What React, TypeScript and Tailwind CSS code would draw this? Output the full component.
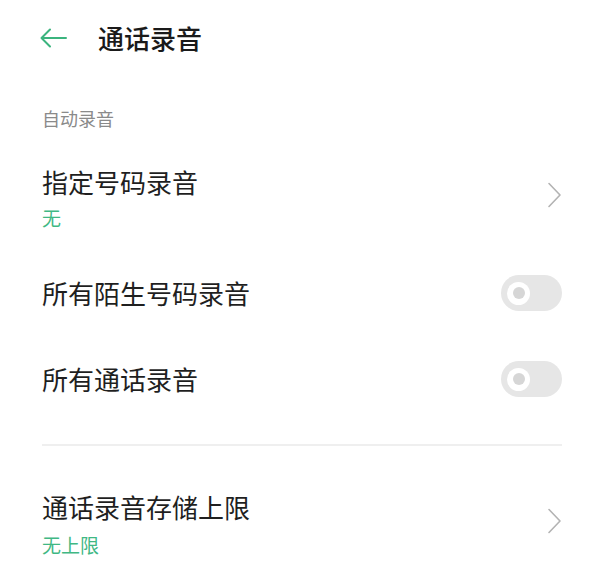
import React from 'react';

const FONT = { fontFamily: '"Noto Sans CJK SC", "Noto Sans", sans-serif' };

function Chevron() {
  return (
    <svg width="15" height="26" viewBox="0 0 15 26" fill="none" className="mb-[6px] shrink-0">
      <path d="M2 1.5 L13 13 L2 24.5" stroke="#b3b3b3" strokeWidth="1.6" strokeLinecap="round" strokeLinejoin="round" />
    </svg>
  );
}

function Toggle() {
  return (
    <div className="w-[61px] h-[36px] rounded-full bg-[#e6e6e6] flex items-center pl-[6px] shrink-0">
      <div className="w-[23px] h-[23px] rounded-full bg-white flex items-center justify-center">
        <div className="w-[12px] h-[12px] rounded-full bg-[#d6d6d6]" />
      </div>
    </div>
  );
}

function NavRow({ title, value, height, gap }: { title: string; value: string; height: string; gap: string }) {
  return (
    <div className={`flex items-center justify-between pl-[42px] pr-[35px] ${height}`}>
      <div className={`flex flex-col ${gap}`}>
        <span className="text-[26px] leading-[34px] text-[#1f1f1f]">{title}</span>
        <span className="text-[19px] leading-[26px] text-[#40b884]">{value}</span>
      </div>
      <Chevron />
    </div>
  );
}

function SwitchRow({ title }: { title: string }) {
  return (
    <div className="flex items-center justify-between pl-[42px] pr-[35px] h-[86px]">
      <span className="text-[26px] leading-[34px] text-[#1f1f1f]">{title}</span>
      <Toggle />
    </div>
  );
}

export default function App() {
  return (
    <div className="w-[597px] h-[587px] bg-white overflow-hidden" style={FONT}>
      <div className="h-[76px] flex items-center pl-[40px]">
        <svg width="27" height="20" viewBox="0 0 27 20" fill="none">
          <path d="M26 10 H2 M10 1.5 L1.5 10 L10 18.5" stroke="#3bb47e" strokeWidth="2" strokeLinecap="round" strokeLinejoin="round" />
        </svg>
        <span className="ml-[31px] text-[26px] leading-[34px] font-medium text-[#1a1a1a]">通话录音</span>
      </div>

      <div className="h-[70px] flex items-end pb-[16px] pl-[42px]">
        <span className="text-[18px] leading-[24px] text-[#8a8a8a]">自动录音</span>
      </div>

      <NavRow title="指定号码录音" value="无" height="h-[104px]" gap="gap-[6px]" />
      <SwitchRow title="所有陌生号码录音" />
      <SwitchRow title="所有通话录音" />

      <div className="h-[46px] flex items-center pl-[42px] pr-[35px]">
        <div className="h-[2px] w-full bg-[#efefef]" />
      </div>

      <NavRow title="通话录音存储上限" value="无上限" height="h-[112px]" gap="gap-[8px]" />
    </div>
  );
}
